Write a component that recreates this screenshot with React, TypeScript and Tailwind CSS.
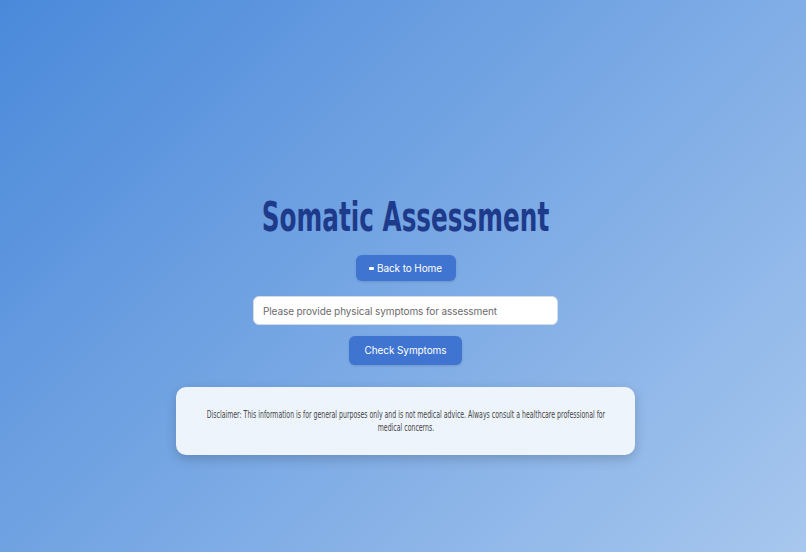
export default function App() {
  return (
    <div className="min-h-[552px] w-full bg-[linear-gradient(135deg,#4a89da_0%,#a7c7ee_100%)] flex flex-col items-center pt-[193px] pl-[5px] font-['Inter',sans-serif]">
      <h1 className="font-['DejaVu_Sans_Condensed',sans-serif] font-bold text-[41px] leading-[48px] text-[#1e3a8a] scale-x-[0.67] whitespace-nowrap">
        Somatic Assessment
      </h1>
      <button className="mt-[14px] h-[26px] w-[100px] rounded-[6px] bg-[#3f75d0] text-white text-[10px] tracking-[-0.1px] flex items-center justify-center gap-[3px] shadow-sm">
        <span className="inline-block w-[5px] h-[3px] bg-white rounded-[1px] mt-[1px]"></span>
        <span>Back to Home</span>
      </button>
      <input
        className="mt-[15px] w-[305px] h-[29px] rounded-[6px] bg-white border border-[#d6dce6] px-[9px] text-[10px] tracking-[-0.1px] text-[#333] placeholder:text-[#6b6b6b] outline-none"
        placeholder="Please provide physical symptoms for assessment"
      />
      <button className="mt-[11px] h-[29px] w-[113px] rounded-[6px] bg-[#3f75d0] text-white text-[10px] tracking-[-0.1px] shadow-sm">
        Check Symptoms
      </button>
      <div className="mt-[22px] w-[459px] h-[68px] rounded-[10px] bg-[#eef4fc] shadow-[0_4px_12px_rgba(0,0,0,0.18)] flex items-center justify-center overflow-visible">
        <p className="shrink-0 w-[596px] scale-x-[0.69] text-center text-[10px] leading-[13px] text-[#444] font-['DejaVu_Sans_Condensed',sans-serif]">
          Disclaimer: This information is for general purposes only and is not medical advice. Always consult a healthcare professional for medical concerns.
        </p>
      </div>
    </div>
  );
}
